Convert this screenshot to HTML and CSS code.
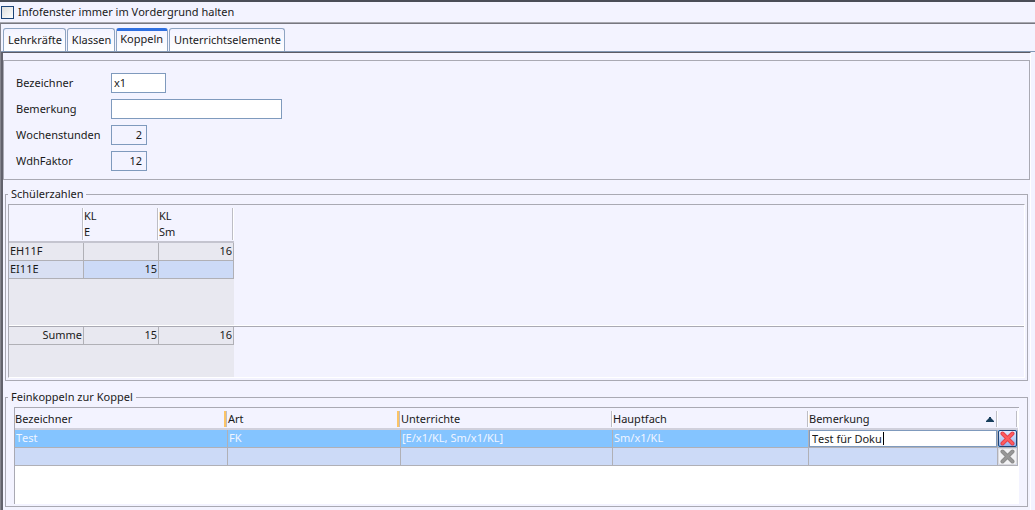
FILE: index.html
```html
<!DOCTYPE html>
<html lang="de">
<head>
<meta charset="utf-8">
<title>Infofenster</title>
<link rel="stylesheet" href="styles.css">
</head>
<body>
<label class="topbar"><input type="checkbox" class="check">Infofenster immer im Vordergrund halten</label>
<div class="frame">
  <nav class="tabs" role="tablist">
    <button class="tab" role="tab">Lehrkräfte</button>
    <button class="tab" role="tab">Klassen</button>
    <button class="tab active" role="tab" aria-selected="true">Koppeln</button>
    <button class="tab" role="tab">Unterrichtselemente</button>
  </nav>
  <main class="pane">
    <form class="details">
      <label for="bez">Bezeichner</label><input id="bez" class="field short" value="x1">
      <label for="bem">Bemerkung</label><input id="bem" class="field long">
      <label for="wst">Wochenstunden</label><input id="wst" class="field number" value="2" readonly>
      <label for="wdh">WdhFaktor</label><input id="wdh" class="field number" value="12" readonly>
    </form>
    <fieldset class="group">
      <legend>Schülerzahlen</legend>
      <div class="scroller">
        <div class="upper">
          <table class="grid counts">
            <thead><tr><th></th><th>KL<br>E</th><th>KL<br>Sm</th></tr></thead>
            <tbody>
              <tr><td>EH11F</td><td></td><td class="num">16</td></tr>
              <tr class="chosen"><td class="name">EI11E</td><td class="num">15</td><td></td></tr>
            </tbody>
          </table>
        </div>
        <div class="lower">
          <table class="grid counts">
            <tbody><tr><td class="num">Summe</td><td class="num">15</td><td class="num">16</td></tr></tbody>
          </table>
        </div>
      </div>
    </fieldset>
    <fieldset class="group">
      <legend>Feinkoppeln zur Koppel</legend>
      <div class="fine-box">
        <table class="grid fine">
          <colgroup><col class="c-name"><col class="c-art"><col class="c-lessons"><col class="c-main"><col><col class="c-del"></colgroup>
          <thead>
            <tr>
              <th class="marked">Bezeichner</th><th class="marked">Art</th><th>Unterrichte</th><th>Hauptfach</th>
              <th><span class="sorted">Bemerkung<svg width="8" height="5" viewBox="0 0 8 5"><path d="M0 5V4L3 1V0H5V1L8 4V5Z" fill="#173e5c"/></svg></span></th><th></th>
            </tr>
          </thead>
          <tbody>
            <tr class="selected">
              <td>Test</td><td>FK</td><td>[E/x1/KL, Sm/x1/KL]</td><td>Sm/x1/KL</td>
              <td class="edit"><div class="editor"><input class="cell-input" value="Test für Doku" aria-label="Bemerkung"><span class="caret"></span></div></td>
              <td class="action"><button class="delete on" aria-label="Löschen"><svg width="15" height="15" viewBox="0 0 15 15"><path d="M2.5 2.5L12.5 12.5M12.5 2.5L2.5 12.5" stroke="#e2404e" stroke-width="4" stroke-linecap="round"/><path d="M2.5 2.5L12.5 12.5M12.5 2.5L2.5 12.5" stroke="#ff5c5c" stroke-width="2.2" stroke-linecap="round"/></svg></button></td>
            </tr>
            <tr class="empty">
              <td></td><td></td><td></td><td></td><td></td>
              <td class="action"><button class="delete" aria-label="Löschen" disabled><svg width="15" height="15" viewBox="0 0 15 15"><path d="M2.5 2.5L12.5 12.5M12.5 2.5L2.5 12.5" stroke="#8c8c8c" stroke-width="4" stroke-linecap="round"/><path d="M2.5 2.5L12.5 12.5M12.5 2.5L2.5 12.5" stroke="#989898" stroke-width="2" stroke-linecap="round"/></svg></button></td>
            </tr>
          </tbody>
        </table>
      </div>
    </fieldset>
  </main>
</div>
</body>
</html>
```
FILE: styles.css
```css
* { box-sizing: border-box; }

body {
  margin: 0;
  min-height: 100vh;
  display: flex;
  flex-direction: column;
  background: #f3f3ff;
  border-top: 2px solid #4a4d57;
  color: #1a1a1a;
  font: 11px/16px "Noto Sans", sans-serif;
  font-kerning: none;
}

button, input { font: inherit; font-kerning: none; color: inherit; margin: 0; }

.topbar {
  display: flex;
  align-items: center;
  gap: 4px;
  height: 21px;
  padding-left: 1px;
  border-bottom: 1px solid #a8a8b0;
}

.check {
  appearance: none;
  width: 13px;
  height: 13px;
  border: 1px solid #1c4478;
  background: linear-gradient(135deg, #dcdcdc, #fff);
}

.frame {
  flex: 1;
  display: flex;
  flex-direction: column;
  border-top: 1px solid #777780;
  border-left: 1px solid #85858e;
}

.tabs {
  display: flex;
  gap: 1px;
  height: 28px;
  padding: 4px 0 0 2px;
  border-bottom: 1px solid #8298b5;
}

.tab {
  padding: 0 3px 0 4px;
  border: 1px solid #8ea4c2;
  border-bottom: 0;
  border-radius: 3px 3px 0 0;
  background: linear-gradient(#f3f3ff, #fff);
}

.tab.active {
  padding: 0 4px 4px 3px;
  border-top: 3px solid #2f6fe0;
}

.pane {
  flex: 1;
  margin: 0 4px 0 0;
  padding-top: 7px;
  border: solid #5c5c66;
  border-width: 1px 1px 0 2px;
  border-left-color: #62626c;
  border-right-color: #fff;
}

.details {
  display: grid;
  grid-template-columns: 95px 1fr;
  row-gap: 6px;
  align-items: center;
  padding: 12px;
  margin-bottom: 6px;
  height: 120px;
  border: 1px solid #a9a9b3;
}

.field {
  height: 20px;
  padding: 0 2px 2px;
  border: 1px solid #7f9abd;
  background: #fff;
}

.short { width: 55px; }
.long { width: 171px; }
.number { width: 36px; padding-right: 4px; background: transparent; text-align: right; }

.group {
  min-width: 0;
  margin: 0 2px 8px;
  padding: 1px 2px 2px;
  border: 1px solid #a9a9b3;
}

.group legend { height: 17px; padding: 0 3px; }

.scroller {
  border: 1px solid #a9a9b3;
  border-right-color: #fff;
  border-bottom-color: #fff;
}

.upper, .lower {
  background: linear-gradient(#e8e8f0, #e8e8f0) no-repeat 0 0 / 225px 100%;
}

.upper { height: 121px; border-bottom: 1px solid #fff; }
.lower { height: 51px; border-top: 1px solid #a9a9b3; }

.grid {
  table-layout: fixed;
  border-collapse: separate;
  border-spacing: 0;
}

.grid th {
  padding: 2px 0 0;
  text-align: left;
  font-weight: normal;
  border-bottom: 2px solid #d0d0dc;
  background:
    linear-gradient(#bdbdc5, #bdbdc5) no-repeat right 1px top 3px / 1px calc(100% - 4px),
    linear-gradient(#fff, #fff) no-repeat right 0 top 3px / 1px calc(100% - 4px),
    #f3f3ff;
}

.grid td {
  height: 18px;
  padding: 0 1px 2px;
  line-height: 15px;
  border-right: 1px solid #b0b0b6;
  border-bottom: 1px solid #b0b0b6;
}

.grid .num { padding-right: 1px; text-align: right; }

.counts { width: 225px; }
.counts th { height: 38px; border-bottom-color: #c4c4cf; }
.chosen td { background: #ccdaf7; }
.chosen .name { background: #d9e0f3; }

.fine-box {
  min-height: 97px;
  margin: 0 6px;
  padding-right: 1px;
  border: 1px solid #a9a9b3;
  border-width: 1px 0 0 1px;
  background: #fff;
}

.fine { width: 100%; }
.c-name { width: 213px; }
.c-art { width: 173px; }
.c-lessons { width: 212px; }
.c-main { width: 196px; }
.c-del { width: 20px; }
.fine th { height: 22px; }

.fine .marked {
  background:
    linear-gradient(#bdbdc5, #bdbdc5) no-repeat right 1px top 3px / 1px 16px,
    linear-gradient(#fcc466, #fcc466) no-repeat right 2px top 3px / 2px 16px,
    #f3f3ff;
}

.selected td { background: #84c4ff; color: #f0f5ff; }
.empty td { background: #ccdaf7; }

.sorted {
  display: flex;
  align-items: center;
  justify-content: space-between;
  padding-right: 4px;
}

.grid .edit, .grid .action { padding: 0; }

.editor { position: relative; height: 17px; color: #1a1a1a; }

.cell-input {
  display: block;
  width: 100%;
  height: 17px;
  padding: 0 2px;
  border: 1px solid #7f9abd;
  background: #fff;
}

.caret {
  position: absolute;
  left: 74px;
  top: 2px;
  width: 1px;
  height: 13px;
  background: #000;
}

.delete {
  display: flex;
  align-items: center;
  justify-content: center;
  width: 100%;
  height: 17px;
  padding: 0;
  border: 1px solid #d8d8de;
  border-radius: 2px;
  background: #f2f2f4;
}

.delete.on {
  border-color: #1c4478;
  background: linear-gradient(#e4edff, #92b4ee);
}
```
